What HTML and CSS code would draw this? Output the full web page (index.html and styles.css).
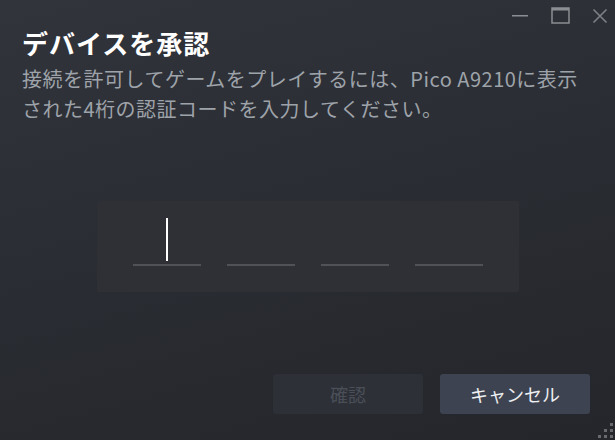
FILE: index.html
```html
<!DOCTYPE html>
<html lang="ja">
<head>
  <meta charset="UTF-8" />
  <meta name="viewport" content="width=device-width, initial-scale=1.0" />
  <title>デバイスを承認</title>
  <link rel="stylesheet" href="styles.css">
</head>
<body>
  <div class="window">
    <div class="titlebar">
      <button class="win-btn" aria-label="最小化">
        <svg width="18" height="18" viewBox="0 0 18 18"><rect x="1" y="8" width="16" height="1.5" fill="#8b8e93"/></svg>
      </button>
      <button class="win-btn" aria-label="最大化">
        <svg width="20" height="18" viewBox="0 0 20 18"><rect x="2" y="1" width="17" height="15" fill="none" stroke="#8b8e93" stroke-width="1.5"/><rect x="2" y="1" width="17" height="2.5" fill="#8b8e93"/></svg>
      </button>
      <button class="win-btn" aria-label="閉じる">
        <svg width="16" height="16" viewBox="0 0 16 16"><path d="M1.5 1.5 L14.5 14.5 M14.5 1.5 L1.5 14.5" stroke="#7d8287" stroke-width="1.6"/></svg>
      </button>
    </div>

    <h1 class="title">デバイスを承認</h1>
    <p class="desc">接続を許可してゲームをプレイするには、Pico A9210に表示された4桁の認証コードを入力してください。</p>

    <div class="code-panel">
      <div class="slot"><span class="caret"></span></div>
      <div class="slot"></div>
      <div class="slot"></div>
      <div class="slot"></div>
    </div>

    <div class="footer">
      <button class="btn btn-disabled" disabled>確認</button>
      <button class="btn btn-cancel">キャンセル</button>
    </div>

    <svg class="grip" width="16" height="16" viewBox="0 0 16 16">
      <rect x="12" y="0" width="3" height="3" fill="#66696e"/>
      <rect x="6" y="6" width="3" height="3" fill="#66696e"/>
      <rect x="12" y="6" width="3" height="3" fill="#66696e"/>
      <rect x="0" y="12" width="3" height="3" fill="#66696e"/>
      <rect x="6" y="12" width="3" height="3" fill="#66696e"/>
      <rect x="12" y="12" width="3" height="3" fill="#66696e"/>
    </svg>
  </div>
</body>
</html>
```

FILE: styles.css
```css
body {
  margin: 0;
  background: #25272c;
  font-family: "Noto Sans CJK JP", "Noto Sans", sans-serif;
}

.window {
  position: relative;
  width: 615px;
  height: 440px;
  overflow: hidden;
  display: flex;
  flex-direction: column;
  background: linear-gradient(165deg, #31343b 0%, #2a2d33 45%, #24262b 100%);
}

.titlebar {
  display: flex;
  justify-content: flex-end;
  height: 27px;
  margin-right: -5px;
}

.win-btn {
  width: 40px;
  height: 32px;
  padding: 0;
  border: none;
  background: transparent;
  display: flex;
  align-items: center;
  justify-content: center;
}

.title {
  margin: 0;
  padding: 0 22px;
  font-size: 26px;
  line-height: 32px;
  font-weight: 700;
  color: #ffffff;
  letter-spacing: 1px;
}

.desc {
  width: 565px;
  margin: 5px 0 0;
  padding: 0 0 0 22px;
  font-size: 20px;
  line-height: 30px;
  letter-spacing: 0.5px;
  color: #9ea3aa;
}

.code-panel {
  width: 422px;
  box-sizing: border-box;
  margin: 77px auto 0;
  padding: 17px 36px 26px;
  display: flex;
  justify-content: space-between;
  background: #2e3036;
  border-radius: 2px;
}

.slot {
  width: 68px;
  height: 46px;
  border-bottom: 2px solid #505257;
  display: flex;
  justify-content: center;
}

.caret {
  width: 2px;
  height: 43px;
  background: #ffffff;
}

.footer {
  margin-top: auto;
  padding: 0 25px 26px;
  display: flex;
  justify-content: flex-end;
  gap: 17px;
}

.btn {
  width: 150px;
  height: 40px;
  border: none;
  border-radius: 3px;
  font-family: "Noto Sans CJK JP", "Noto Sans", sans-serif;
  font-size: 18px;
}

.btn-disabled {
  background: #2d3037;
  color: #4a4f57;
}

.btn-cancel {
  background: #3d4350;
  color: #eceef1;
}

.grip {
  position: absolute;
  right: 1px;
  bottom: 1px;
}
```
